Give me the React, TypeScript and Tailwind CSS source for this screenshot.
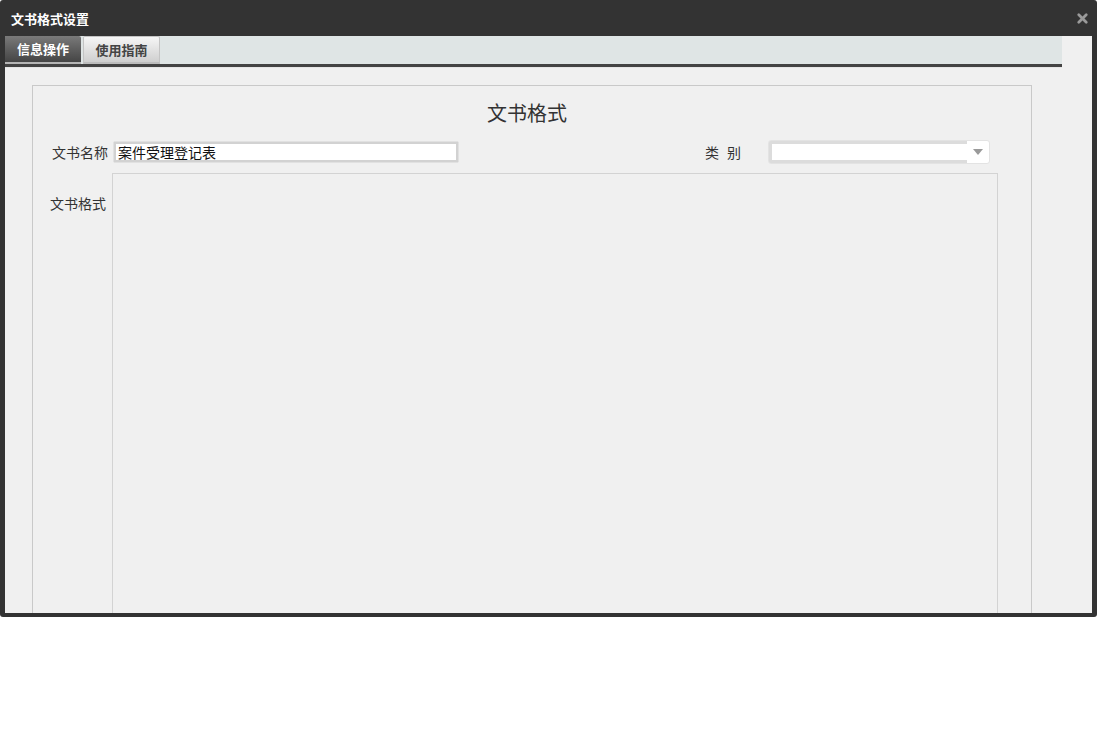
import { X } from "lucide-react";

const font = { fontFamily: '"Noto Sans CJK SC", "Noto Sans", sans-serif' };

const App = () => {
  return (
    <div className="w-[1099px] h-[747px] bg-white" style={font}>
      {/* dialog frame */}
      <div className="w-[1097px] h-[617px] bg-[#333333] rounded-[3px] flex flex-col">
        {/* title bar */}
        <div className="h-[36px] flex items-center justify-between pl-[11px] pr-[7px]">
          <span className="text-[13px] font-bold text-white leading-none">文书格式设置</span>
          <X className="w-[15px] h-[15px] text-[#9a9a9a]" strokeWidth={4.5} />
        </div>

        {/* body */}
        <div className="mx-[5px] h-[577px] bg-[#f0f0f0] overflow-hidden">
          <div className="w-[1057px] h-full flex flex-col">
            {/* tabs */}
            <div className="h-[32px] bg-[#dfe5e5] border-b-[3px] border-[#434343] flex items-end gap-[2px]">
              <div className="w-[76px] h-[28px] flex items-center justify-center bg-gradient-to-b from-[#7a7a7a] to-[#454545] border-b-2 border-[#b5b5b5] rounded-tr-[2px]">
                <span className="text-[13px] font-bold text-white">信息操作</span>
              </div>
              <div className="w-[77px] h-[28px] flex items-center justify-center bg-gradient-to-b from-[#f6f6f6] to-[#cfcfcf] border border-b-2 border-[#c4c4c4] border-b-[#bdbdbd] rounded-t-[2px]">
                <span className="text-[13px] font-bold text-[#444]">使用指南</span>
              </div>
            </div>

            {/* content */}
            <div className="flex-1 pt-[17px] pl-[27px] pr-[30px] border-t border-[#e6e6e6]">
              <div className="w-[1000px] h-full border border-b-0 border-[#c9c9c9]">
                <div className="pt-[14px] pr-[10px] text-center text-[20px] leading-[26px] text-[#333]">文书格式</div>

                <div className="mt-[16px] flex items-center h-[20px]">
                  <div className="w-[75px] shrink-0 text-right text-[14px] text-[#333]">文书名称</div>
                  <div className="ml-[6px] shrink-0 w-[344px] h-[20px] bg-white border-[2px] border-[#d2d2d2] shadow-[0_0_1px_#999] flex items-center pl-[2px]">
                    <span className="text-[14px] leading-none text-[#111]">案件受理登记表</span>
                  </div>
                  <div className="ml-[247px] shrink-0 flex text-[14px] text-[#333]">
                    <span>类</span>
                    <span className="ml-[8px]">别</span>
                  </div>
                  <div className="ml-[27px] shrink-0 w-[222px] h-[24px] bg-white rounded-[3px] border border-[#e3e3e3] flex">
                    <div className="flex-1 border-[3px] border-r-0 border-[#dcdcdc] rounded-l-[2px]" />
                    <div className="w-[22px] flex items-center justify-center">
                      <svg width="10" height="6" viewBox="0 0 10 6">
                        <path d="M0 0 L10 0 L5 6 Z" fill="#9a9a9a" />
                      </svg>
                    </div>
                  </div>
                </div>

                <div className="mt-[11px] flex">
                  <div className="w-[73px] shrink-0 pt-[20px] text-right text-[14px] text-[#333]">文书格式</div>
                  <div className="ml-[6px] shrink-0 w-[886px] h-[460px] border border-[#d3d3d3]" />
                </div>
              </div>
            </div>
          </div>
        </div>
      </div>
    </div>
  );
};

export default App;
